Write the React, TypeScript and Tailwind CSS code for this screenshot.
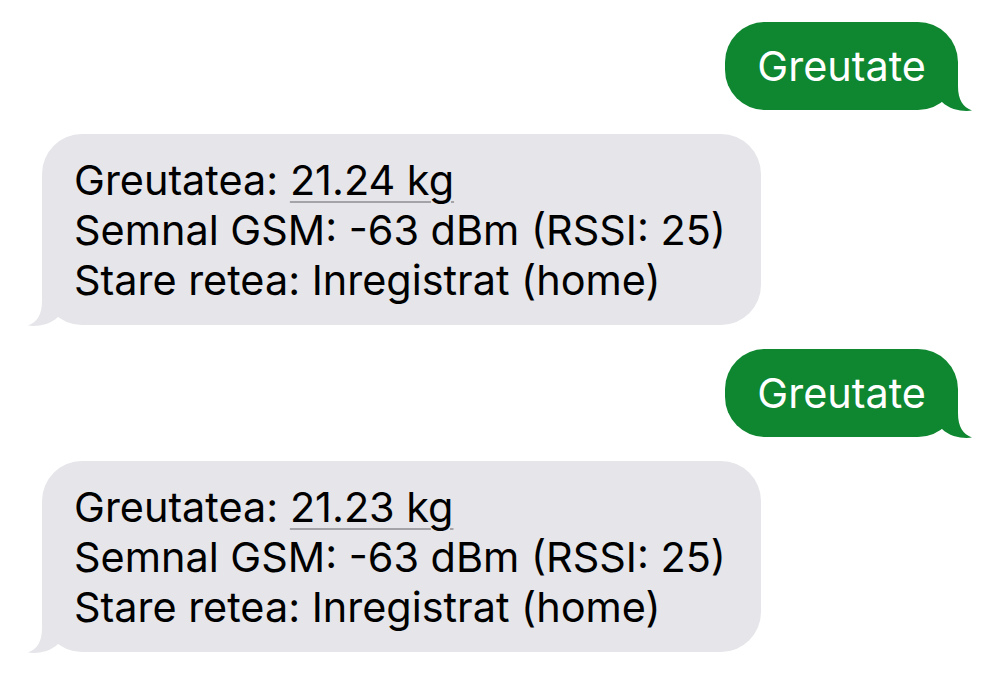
import React from 'react'

type Side = 'in' | 'out'

const Tail: React.FC<{ side: Side }> = ({ side }) => {
  const fill = side === 'out' ? '#0e8730' : '#e5e5ea'
  return (
    <svg
      width="48"
      height="44"
      viewBox="0 0 48 44"
      className={
        side === 'out'
          ? 'absolute bottom-[-4px] right-[-18px]'
          : 'absolute bottom-[-4px] left-[-18px] -scale-x-100'
      }
      aria-hidden
    >
      <path d="M30 0 L30 16 C30 30 35 37 44 40.5 C36 42 22 40 14 32 L0 32 L0 0 Z" fill={fill} />
    </svg>
  )
}

const Sent: React.FC<{ text: string }> = ({ text }) => (
  <div className="flex justify-end pr-[42px]">
    <div className="relative rounded-[40px] bg-[#0e8730] px-8 py-[19px] text-white">
      <Tail side="out" />
      <span className="relative">{text}</span>
    </div>
  </div>
)

const Received: React.FC<{ kg: string }> = ({ kg }) => (
  <div className="flex justify-start pl-[42px]">
    <div className="relative rounded-[40px] bg-[#e5e5ea] pl-8 pr-[35px] pt-[21px] pb-[20px] text-black">
      <Tail side="in" />
      <div className="relative">
        <div>
          Greutatea:{' '}
          <span className="underline decoration-[#a3a3a8] decoration-2 underline-offset-[6px]">{kg}</span>
        </div>
        <div>Semnal GSM: -63 dBm (RSSI: 25)</div>
        <div>Stare retea: Inregistrat (home)</div>
      </div>
    </div>
  </div>
)

export default function App() {
  return (
    <div className="min-h-[690px] w-[1000px] bg-white pt-[22px] font-['Inter',sans-serif] text-[41.4px] leading-[50px]">
      <div className="flex flex-col gap-6">
        <Sent text="Greutate" />
        <Received kg="21.24 kg" />
        <Sent text="Greutate" />
        <Received kg="21.23 kg" />
      </div>
    </div>
  )
}
